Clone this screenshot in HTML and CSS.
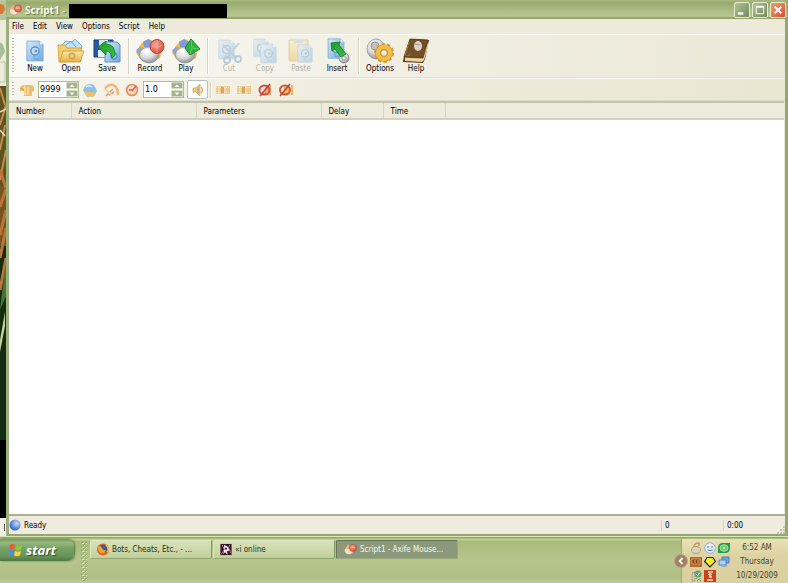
FILE: index.html
```html
<!DOCTYPE html>
<html lang="en">
<head>
<meta charset="utf-8">
<title>Script1</title>
<link rel="stylesheet" href="styles.css">
</head>
<body>
<svg class="defs" aria-hidden="true">
  <defs>
    <linearGradient id="blue" x1="0" y1="0" x2="1" y2="1"><stop offset="0" stop-color="#d8eafa"/><stop offset="1" stop-color="#6fa8dc"/></linearGradient>
    <linearGradient id="gold" x1="0" y1="0" x2="0" y2="1"><stop offset="0" stop-color="#fdeaa8"/><stop offset="1" stop-color="#e9b040"/></linearGradient>
    <linearGradient id="greenArrow" x1="0" y1="0" x2="1" y2="1"><stop offset="0" stop-color="#1f9a2c"/><stop offset="1" stop-color="#35c540"/></linearGradient>
    <radialGradient id="ball" cx=".4" cy=".3" r=".8"><stop offset="0" stop-color="#ffffff"/><stop offset=".5" stop-color="#d9d9dc"/><stop offset="1" stop-color="#77777c"/></radialGradient>
    <radialGradient id="red" cx=".4" cy=".35" r=".7"><stop offset="0" stop-color="#f4a392"/><stop offset="1" stop-color="#d64a38"/></radialGradient>
    <radialGradient id="orb" cx=".65" cy=".35" r=".7"><stop offset="0" stop-color="#c4dcfa"/><stop offset="1" stop-color="#2c60c4"/></radialGradient>
    <symbol id="mouse" viewBox="0 0 30 26">
      <path d="M4 9 9 3l5-2 4 2 4 7-10 5z" fill="#f1c04c"/>
      <path d="M8 4 13 1l5 3-2 5H9z" fill="#7f9cd6"/>
      <path d="M1 14 5 8l5 2 1 8-6 3z" fill="#eca93e"/>
      <path d="M1 12l4-3 3 3-4 5z" fill="#8aa5d9"/>
      <path d="M21 14l5 1-1 5-5 2z" fill="#e9b04a"/>
      <ellipse cx="14" cy="17" rx="9.500" ry="8" fill="url(#ball)" stroke="#8b8b8f" stroke-width=".6"/>
      <path d="M6 14q7-4 14-2" fill="none" stroke="#fff" stroke-width="1.4"/>
    </symbol>
    <symbol id="page" viewBox="0 0 20 24">
      <path d="M1 1h14l4 4v18H1z" fill="url(#blue)" stroke="#80acd6"/>
      <path d="M15 1v4h4" fill="#f2f8fe" stroke="#80acd6" stroke-width=".7"/>
      <circle cx="10" cy="12" r="4.5" fill="#c2dcf2" stroke="#5b92c7" stroke-width="1.6"/>
      <circle cx="11" cy="12" r="1.5" fill="#568fc7"/><path d="M9 16v5h5" fill="none" stroke="#72a6d4" stroke-width="1.3"/>
    </symbol>
    <symbol id="appmouse" viewBox="0 0 14 12">
      <ellipse cx="5" cy="7" rx="4.5" ry="4" fill="#f1e5d0" stroke="#b48b66" stroke-width=".6"/>
      <path d="M1 5 4 1l3 2-2 3z" fill="#eeb26b"/>
      <circle cx="9" cy="4.5" r="3.6" fill="url(#red)" stroke="#b94c3b" stroke-width=".6"/>
      <path d="M7 4h4" stroke="#fbd0bd" stroke-width=".7"/>
    </symbol>
    <symbol id="film" viewBox="0 0 14 10">
      <path d="M0 1h14v8H0z" fill="#ecc98a"/><path d="M0 2.500h14M0 7.500h14" stroke="#f7e5be" stroke-dasharray="1 1"/>
      <path d="M5 2h3v6H5z" fill="#d6a663"/><path d="M9 1v8M3 1v8" stroke="#f8e6c0"/>
    </symbol>
  </defs>
</svg>

<div class="screen">
  <div class="desktop" aria-hidden="true">
    <svg viewBox="0 0 6 536" preserveAspectRatio="none">
      <path d="M0 0h6v536H0z" fill="#142c10"/>
      <path d="M0 0h6v20H0z" fill="#b8c59d"/><path d="M0 4l4 1 1 5-3 4H0z" fill="#d87832"/>
      <path d="M0 20h6v66H0z" fill="#ecebdc"/><path d="M0 42q4 2 5 10l-5 8z" fill="#a8bf98"/><path d="M0 62h5v20H0" fill="none" stroke="#b9c49f"/>
      <path d="M0 86h6v100H0z" fill="#5b5420"/><path d="M0 186h6v60H0z" fill="#76541f"/>
      <path d="M0 88l5 17M0 125l6-20M0 150l5-25M0 180l6-30" stroke="#c98a4c" stroke-width="2"/>
      <path d="M0 112l6-3M0 130l5 6" stroke="#f3dfbd" stroke-width="1.5"/>
      <path d="M0 170l6 18M0 207l6-18M0 235l6-25M0 258l6-30M0 290l6-32" stroke="#bd7438" stroke-width="3"/>
      <path d="M0 310l6-50v36z" fill="#4c7336"/><path d="M0 340l5-28v14l-5 26z" fill="#c5d0a0"/>
      <path d="M0 440h6v78H0z" fill="#000"/><path d="M0 518h6v18H0z" fill="#f0efe6"/><path d="M4 524h1v7H4z" fill="#555"/>
    </svg>
  </div>

  <main class="window">
    <header class="titlebar">
      <svg class="app-icon" viewBox="0 0 14 12"><use href="#appmouse"/></svg>
      <h1>Script1 -</h1>
      <span class="redacted"></span>
      <div class="window-buttons">
        <button class="win-btn" aria-label="Minimize"><svg viewBox="0 0 15 15"><path d="M3 10h6v2.500H3z" fill="#fff"/></svg></button>
        <button class="win-btn" aria-label="Maximize"><svg viewBox="0 0 15 15"><path d="M3.500 4h8v7.500h-8z" fill="none" stroke="#fff"/><path d="M3 3h9v2H3z" fill="#fff"/></svg></button>
        <button class="win-btn close" aria-label="Close"><svg viewBox="0 0 15 15"><path d="M4 4l7 7M11 4l-7 7" stroke="#fff" stroke-width="2"/></svg></button>
      </div>
    </header>

    <nav class="menubar">
      <button>File</button><button>Edit</button><button>View</button><button>Options</button><button>Script</button><button>Help</button>
    </nav>

    <div class="toolbar main-tools">
      <span class="grip"></span>
      <button class="tool"><svg viewBox="0 0 30 26"><use href="#page" x="6" y="2" width="18" height="22"/></svg>New</button>
      <button class="tool"><svg viewBox="0 0 30 26">
        <path d="M4 9l6-6 6 1 3-3 7 7-2 8H5z" fill="#c6dff4" stroke="#79a8d2" stroke-width=".8"/><path d="M10 7l5-4 5 6" fill="none" stroke="#6fa2d0"/>
        <path d="M3 24 2 7h7l2 3h14v13z" fill="#f4ce6e" stroke="#cf982f" stroke-width=".8"/><path d="M4 24 7 13h21l-4 11z" fill="url(#gold)" stroke="#cc9433" stroke-width=".8"/>
        <circle cx="16" cy="18" r="2.800" fill="none" stroke="#c9a050" stroke-width="1.500"/></svg>Open</button>
      <button class="tool"><svg viewBox="0 0 30 26">
        <path d="M2 2h19v17H2z" fill="#2459a8" stroke="#163c78"/><path d="M7 2h9v6H7z" fill="#dce8f4"/><path d="M6 12h11v7H6z" fill="#e8eff6"/>
        <path d="M13 4h12l3 3v17H13z" fill="url(#blue)" stroke="#5f95c9"/><circle cx="22" cy="18" r="3" fill="none" stroke="#5f95c9" stroke-width="1.400"/>
        <path d="M6 9l8-6v3q9 0 9 11l-3 3q-1-7-6-7v4z" fill="url(#greenArrow)" stroke="#0f7a1c" stroke-width=".8"/></svg>Save</button>
      <span class="sep"></span>
      <button class="tool"><svg viewBox="0 0 30 26"><use href="#mouse" width="30" height="26"/><circle cx="22" cy="8.500" r="7" fill="url(#red)" stroke="#c04433"/><path d="M17 8q5 3 10-1M22 2v13" fill="none" stroke="#f5b0a0" stroke-width=".8"/></svg>Record</button>
      <button class="tool"><svg viewBox="0 0 30 26"><use href="#mouse" width="30" height="26"/><path d="M20 1l9 10-10 6-5-7z" fill="#2fb33a" stroke="#16872a"/><path d="M20 2l1 8-2 6M21 10l7 1" fill="none" stroke="#71d36d" stroke-width=".8"/></svg>Play</button>
      <span class="sep"></span>
      <button class="tool" disabled><svg viewBox="0 0 30 26"><use href="#page" x="4" y="1" width="17" height="21"/><path d="M9 7l14 13M25 5 13 20" stroke="#759abf" stroke-width="2"/><circle cx="13" cy="22" r="3" fill="none" stroke="#5d90cb" stroke-width="1.800"/><circle cx="24" cy="21" r="3" fill="none" stroke="#5d90cb" stroke-width="1.800"/></svg>Cut</button>
      <button class="tool" disabled><svg viewBox="0 0 30 26"><use href="#page" x="3" y="0" width="16" height="20"/><use href="#page" x="10" y="5" width="17" height="21"/></svg>Copy</button>
      <button class="tool" disabled><svg viewBox="0 0 30 26"><path d="M3 2h19v21H3z" fill="url(#gold)" stroke="#c89c50"/><path d="M8 1h9v4H8z" fill="#bcc4cc"/><use href="#page" x="11" y="6" width="16" height="19"/></svg>Paste</button>
      <button class="tool"><svg viewBox="0 0 30 26"><use href="#page" x="5" y="0" width="18" height="21"/><circle cx="22" cy="20" r="5" fill="url(#ball)" stroke="#777b7d" stroke-width=".8"/><circle cx="22" cy="20" r="2" fill="#eff2f2" stroke="#979b9c"/><path d="M9 5l9-1-1 3 7 9-5 3-6-8-3 2z" fill="url(#greenArrow)" stroke="#0f7a1c" stroke-width=".8"/></svg>Insert</button>
      <span class="sep"></span>
      <button class="tool"><svg viewBox="0 0 30 26"><ellipse cx="11" cy="11" rx="9" ry="10" fill="url(#ball)" stroke="#8c8c8e" stroke-width=".7"/><circle cx="10" cy="8" r="4" fill="#c2c2c5" stroke="#929296"/>
        <circle cx="19" cy="15" r="8.500" fill="none" stroke="#dd9e2c" stroke-width="3" stroke-dasharray="3 2.340"/><circle cx="19" cy="15" r="6" fill="none" stroke="#c9892a" stroke-width="5.500"/><circle cx="19" cy="15" r="6" fill="none" stroke="#f3bd48" stroke-width="4.500"/><circle cx="19" cy="15" r="3.300" fill="#f4eed8" stroke="#b97a1f" stroke-width=".8"/></svg>Options</button>
      <button class="tool"><svg viewBox="0 0 30 26"><path d="M9 1l19 1-4 19-2 4L2 24l1-6z" fill="#523415"/><path d="M4 19l17 1 6-16 1 1-5 17-2 2-17-1z" fill="#e6d5a2"/><path d="M9 1l18 1-5 18-19-1z" fill="#755026" stroke="#493015" stroke-width=".7"/><ellipse cx="17" cy="8" rx="4" ry="5" fill="#d9d3c8"/><path d="M14 6l5 1" stroke="#a29787"/><path d="M8 4l-4 14" stroke="#a87b37"/><path d="M5 18h4l1-3z" fill="#5c8b34"/></svg>Help</button>
    </div>

    <div class="toolbar play-tools">
      <span class="grip"></span>
      <button class="mini" aria-label="Repeat"><svg viewBox="0 0 16 14"><path d="M1 4l3-2h9l2 2v4l-2 1v4H5V8H1z" fill="#edbd72"/><path d="M6 3v9M9 4v8" stroke="#f8dba2" stroke-width="1.500"/><path d="M2 5l3 2" stroke="#d3964c"/></svg></button>
      <span class="spin"><input type="text" value="9999" aria-label="Repeat count"><span class="arrows"><button aria-label="More repeats"><svg viewBox="0 0 8 5"><path d="M1.500 4 4 1.500 6.500 4z" fill="#fff"/></svg></button><button aria-label="Fewer repeats"><svg viewBox="0 0 8 5"><path d="M1.500 1.500 4 4l2.500-2.500z" fill="#fff"/></svg></button></span></span>
      <button class="mini" aria-label="Mouse moves"><svg viewBox="0 0 16 14"><path d="M1 7q2-6 7-6 4 0 5 3l2 4-3 5-7 1z" fill="#8dbfe8"/><path d="M1 7q4 3 9 2l4 1-3 4-7-1z" fill="#edc267"/><path d="M4 4q3-2 6 0" fill="none" stroke="#d9efff" stroke-width="1.500"/></svg></button>
      <button class="mini" aria-label="Delays"><svg viewBox="0 0 16 14"><path d="M2 6q3-5 8-4 5 2 5 10" fill="none" stroke="#f0b878" stroke-width="2.500"/><path d="M3 13 10 6M6 12l5-3" stroke="#d99a78" stroke-width="1.500"/><path d="M3 7l6 5" stroke="#f5d4a5" stroke-width="2"/></svg></button>
      <button class="mini" aria-label="Speed"><svg viewBox="0 0 16 14"><circle cx="8" cy="7" r="5.500" fill="#fbd9bb" stroke="#e98a55" stroke-width="1.600"/><path d="M8 8l4-5M5 7h3" stroke="#cf5a72" stroke-width="1.500"/></svg></button>
      <span class="spin"><input type="text" value="1.0" aria-label="Speed factor"><span class="arrows"><button aria-label="Faster"><svg viewBox="0 0 8 5"><path d="M1.500 4 4 1.500 6.500 4z" fill="#fff"/></svg></button><button aria-label="Slower"><svg viewBox="0 0 8 5"><path d="M1.500 1.500 4 4l2.500-2.500z" fill="#fff"/></svg></button></span></span>
      <button class="mini pressed" aria-label="Sound"><svg viewBox="0 0 16 14"><path d="M3 5h3l4-4v12L6 9H3z" fill="#f0cb72" stroke="#d5a95c" stroke-width=".8"/><path d="M8 4v6" stroke="#a2abc8" stroke-width="1.500"/><path d="M11 4q3 3 0 6" fill="none" stroke="#e2ab4d" stroke-width="1.400"/></svg></button>
      <span class="sep"></span>
      <button class="mini" aria-label="Show frames"><svg viewBox="0 0 16 14"><use href="#film" x="1" y="2" width="14" height="10"/></svg></button>
      <button class="mini" aria-label="Next frame"><svg viewBox="0 0 16 14"><use href="#film" x="1" y="2" width="14" height="10"/></svg></button>
      <button class="mini" aria-label="Hide frames"><svg viewBox="0 0 16 14"><path d="M9 2h5v10H6z" fill="#eda979"/><ellipse cx="7.500" cy="7" rx="5" ry="4.500" fill="none" stroke="#d4503c" stroke-width="2"/><path d="M3 13 13 1" stroke="#b8473b" stroke-width="1.500"/></svg></button>
      <button class="mini" aria-label="Clear frames"><svg viewBox="0 0 16 14"><path d="M13 2h2v10h-2zM6 4h5v8H6z" fill="#edba59"/><ellipse cx="7" cy="7" rx="5" ry="4.500" fill="none" stroke="#d4503c" stroke-width="2"/><path d="M2 13 12 1" stroke="#b8473b" stroke-width="1.500"/></svg></button>
    </div>

    <section class="list">
      <table>
        <thead><tr><th class="narrow">Number</th><th class="wide">Action</th><th class="wide">Parameters</th><th class="narrow">Delay</th><th class="narrow">Time</th><th></th></tr></thead>
      </table>
    </section>

    <footer class="statusbar">
      <svg class="orb" viewBox="0 0 12 12"><circle cx="6" cy="6" r="5.500" fill="url(#orb)"/></svg>
      <span class="ready">Ready</span>
      <span class="cell">0</span>
      <span class="cell">0:00</span>
      <svg class="resize" viewBox="0 0 8 8"><path d="M6 0h2v2H6zM3 3h2v2H3zM6 3h2v2H6zM0 6h2v2H0zM3 6h2v2H3zM6 6h2v2H6z" fill="#c4c1ae"/></svg>
    </footer>
  </main>

  <div class="taskbar">
    <button class="start"><svg viewBox="0 0 15 14"><path d="M2 2q3-2 5 0L6 6.500q-3-1.500-5 0z" fill="#ee5b2e"/><path d="M8 2.500q3 1.500 6 0L13 7q-3 1.500-6 0z" fill="#8ccc3a"/><path d="M1 7.500q3-2 5 0L5 12q-3-1.500-5 0z" fill="#4a8fe6"/><path d="M7 8q3 1.500 6 0l-1 4.500q-3 1.500-6 0z" fill="#fbd03b"/></svg>start</button>
    <svg class="dots" aria-hidden="true"><defs><pattern id="dot" width="4" height="4" patternUnits="userSpaceOnUse"><path d="M0 0h2v1H0zM2 2h2v1H2z" fill="#8fa268"/><path d="M1 1h2v1H1zM3 3h1v1H3z" fill="#e8efc9"/></pattern></defs><rect width="6" height="100%" fill="url(#dot)"/></svg>
    <div class="tasks">
      <button class="task"><svg viewBox="0 0 14 14"><circle cx="7" cy="7" r="6.500" fill="#d86421"/><circle cx="7.500" cy="6" r="4" fill="#36609f"/><path d="M1 3l4 1 2 3 3 1-2 3q-5 1-6-4z" fill="#f1a032"/><path d="M10 2q4 3 2 8" fill="none" stroke="#f7bd4e" stroke-width="1.500"/></svg>Bots, Cheats, Etc., - ...</button>
      <button class="task"><svg viewBox="0 0 14 14"><path d="M1 1h12v12H1z" fill="#321326"/><path d="M5 2l4 2 2 4-3 1 1 4-3-3-2 2 1-5z" fill="#f6e9ef"/><path d="M3 2l2 5-3 5M11 2l-1 3 2 6" fill="none" stroke="#ba7398"/><path d="M6 5h2v2H6z" fill="#321326"/></svg>«i online</button>
      <button class="task active"><svg viewBox="0 0 14 12"><use href="#appmouse"/></svg>Script1 - Axife Mouse...</button>
    </div>
    <aside class="tray">
      <button class="chevron" aria-label="Hide icons"><svg viewBox="0 0 14 14"><circle cx="7" cy="7" r="6.500" fill="#a48062" stroke="#c2a282"/><path d="M8.500 4 5.500 7l3 3" fill="none" stroke="#fff" stroke-width="1.800"/></svg></button>
      <div class="tray-icons">
        <svg viewBox="0 0 12 12"><ellipse cx="6" cy="8" rx="4.500" ry="3.500" fill="#ddd2bd" stroke="#b99d76"/><path d="M4 5q0-4 5-4v3" fill="none" stroke="#cb9460" stroke-width="1.500"/></svg>
        <svg viewBox="0 0 12 12"><circle cx="6" cy="6" r="5.300" fill="#e6eff8" stroke="#9aaecb"/><path d="M3 5h2M7 5h2M3.500 8q2.500 1 5 0" fill="none" stroke="#4d75b8"/></svg>
        <svg viewBox="0 0 12 12"><path d="M0 6q0-5 5-5h7v5q0 5-5 5H0z" fill="#1f9a48"/><ellipse cx="6" cy="6" rx="4" ry="3.200" fill="#5cc560" stroke="#b4e8a6"/><circle cx="6" cy="6" r="1.300" fill="#f0ffdb"/></svg>
        <svg viewBox="0 0 12 12"><path d="M0 1h12v10H0z" fill="#b46a2e"/><path d="M2 3h8v5H2z" fill="#74401e" stroke="#e49c55"/><path d="M5 4v3M8 4v3" stroke="#f0c887"/></svg>
        <svg viewBox="0 0 12 12"><path d="M.7 5.500 3 1.500h6l2.400 4L6 11z" fill="#f5ef21" stroke="#28280c" stroke-width="1.200"/></svg>
        <svg viewBox="0 0 12 12"><path d="M4 1h7v6H4z" fill="#6fa5ee" stroke="#5578ae"/><path d="M1 4h7v5H1z" fill="#a9d3fb" stroke="#5c82b5"/><path d="M4 9h5v2H3z" fill="#9daabb"/></svg>
        <svg viewBox="0 0 12 12"><path d="M2 3l3-1v9H2zM6 8l5 3M7 11l4-3" fill="none" stroke="#868e83" stroke-dasharray="1.500 .8"/><circle cx="8" cy="4" r="3.500" fill="#56ae68"/><path d="M6 4l1.500 1.500L10 2.500" fill="none" stroke="#fff"/></svg>
        <svg viewBox="0 0 12 12"><path d="M0 0h12v12H0z" fill="#cf3f1a"/><path d="M4 2h5M4 4.500h4M5 7h3M3 10h6" stroke="#ffe7c2" stroke-width="1.500"/><path d="M6 3v5" stroke="#ffe7c2"/></svg>
      </div>
      <div class="clock"><span>6:52 AM</span><span>Thursday</span><span>10/29/2009</span></div>
    </aside>
  </div>
</div>
</body>
</html>
```
FILE: styles.css
```css
* { box-sizing: border-box; }

body {
  margin: 0;
  font: 8px/10px "DejaVu Sans Condensed", "Noto Sans", sans-serif;
  color: #000;
}

button {
  margin: 0;
  padding: 0;
  border: 0;
  background: none;
  font: inherit;
  color: inherit;
}

svg { display: block; flex: none; }

.defs { position: absolute; width: 0; height: 0; }

.screen {
  display: grid;
  grid-template: minmax(0, 1fr) 47px / 6px minmax(0, 1fr);
  height: 100vh;
}

.desktop svg { width: 100%; height: 100%; }
.desktop { min-height: 0; }

.window {
  display: flex;
  flex-direction: column;
  min-height: 0;
  border: solid #93a870;
  border-width: 0 3px 2px;
  border-left-color: #9bae7d;
  background: #ece9d8;
}

/* Title bar */
.titlebar {
  display: flex;
  align-items: center;
  height: 19px;
  padding: 0 1px 0 2px;
  margin: 0 -2px;
  background: linear-gradient(#a9ba80, #98aa6e 15%, #abbd83 55%, #b7c690 85%, #8fa369 95%);
}
.app-icon { width: 14px; height: 12px; }
h1 {
  margin: 0 0 0 2px;
  width: 44px;
  font: bold 10px/14px "Open Sans", "Noto Sans", sans-serif;
  color: #fbfcef;
  text-shadow: 1px 1px 1px #65743f;
  white-space: nowrap;
}
.redacted { width: 158px; height: 14px; margin-top: 3px; background: #000; }
.window-buttons { display: flex; gap: 2px; margin-left: auto; }
.win-btn {
  width: 16px;
  height: 16px;
  border: 1px solid #e6edcf;
  border-radius: 2px;
  background: linear-gradient(135deg, #b3c296, #74885a);
}
.win-btn svg { width: 100%; height: 100%; }
.win-btn.close { background: linear-gradient(135deg, #f39a78, #d94f2b); }

/* Menu */
.menubar {
  display: flex;
  gap: 1px;
  height: 15px;
  background: #edeadb;
}
.menubar button { padding: 1px 4px 0; }
.menubar button:first-child { padding-left: 3px; }

/* Toolbars */
.toolbar {
  display: flex;
  align-items: center;
  border-top: 1px solid #fbfaf3;
  border-bottom: 1px solid #dfdcc8;
  background: linear-gradient(90deg, #fafaf6, #f1efe3 50%, #ebe8d7);
}
.main-tools { height: 44px; }
.play-tools {
  height: 23px;
  background: linear-gradient(90deg, #f6f5ed, #efecde 45%, #e9e6d2);
}
.grip {
  width: 2px;
  align-self: stretch;
  margin: 3px 2px 3px 3px;
  background: repeating-linear-gradient(#b4b6a4 0 1px, #f8f8f0 1px 3px);
}
.tool {
  display: flex;
  flex-direction: column;
  align-items: center;
  width: 36px;
}
.tool svg { width: 30px; height: 26px; }
.tool:disabled { color: #b5b3a8; }
.tool:disabled svg { opacity: .4; }
.main-tools .grip { margin-right: 3px; }
.sep {
  width: 2px;
  align-self: stretch;
  margin: 3px 2px 3px 3px;
  border-left: 1px solid #d6d3c2;
  border-right: 1px solid #fdfdf8;
}
.play-tools .sep { margin: 3px 0 3px 2px; }
.mini {
  display: grid;
  place-items: center;
  width: 21px;
  height: 19px;
}
.mini svg { width: 16px; height: 14px; }
.pressed {
  margin: 0 0 0 3px;
  border: 1px solid #b9c0c3;
  border-radius: 2px;
  background: #fff;
}
.spin {
  display: flex;
  width: 41px;
  height: 17px;
  margin-left: 1px;
  border: 1px solid #b1bb98;
  background: #fff;
}
.spin input {
  flex: 1;
  min-width: 0;
  padding: 0 0 1px 1px;
  border: 0;
  background: none;
  font: 9px/12px "DejaVu Sans Condensed", "Noto Sans", sans-serif;
  color: #000;
}
.arrows { display: grid; gap: 1px; width: 12px; }
.arrows button {
  display: grid;
  place-items: center;
  border: 1px solid #d5dcc4;
  border-radius: 1px;
  background: #a3b38d;
}
.arrows svg { width: 8px; height: 5px; }

/* List */
.list {
  flex: 1;
  min-height: 0;
  margin-right: 1px;
  border-top: 2px solid #c3c4b0;
  background: #fff;
}
table { width: 100%; table-layout: fixed; border-collapse: collapse; }
th {
  height: 16px;
  padding: 3px 0 1px 7px;
  border-right: 1px solid #d6d3c2;
  border-bottom: 2px solid #d3d0be;
  background: #edebdb;
  font-weight: normal;
  text-align: left;
}
th:last-child { border-right: 0; }
.narrow { width: 62px; }
.wide { width: 125px; }

/* Status bar */
.statusbar {
  display: flex;
  align-items: center;
  height: 20px;
  border-top: 2px solid #adad98;
  background: #efecdf;
}
.orb { width: 12px; height: 12px; }
.ready { flex: 1; padding: 1px 0 0 3px; }
.cell { width: 62px; padding: 1px 0 0 3px; border-left: 1px solid #d4d1bf; }
.cell + .cell { width: 54px; }
.resize { width: 8px; height: 8px; align-self: flex-end; }

/* Taskbar */
.taskbar {
  grid-column: 1 / -1;
  display: flex;
  align-items: flex-start;
  background: linear-gradient(#dde7ba 0 1px, #8fa667 1px 2px, #c8d59c 3px, #aabb7d 5px, #b6c58c 24px, #b0bf86 42px, #c0cc98);
}
.start {
  display: flex;
  align-items: center;
  gap: 3px;
  width: 74px;
  height: 22px;
  margin-top: 3px;
  padding-left: 8px;
  border-radius: 0 7px 7px 0;
  background: linear-gradient(#6a9557, #97b982 15%, #74a061 45%, #66935a 80%, #4c763e);
  box-shadow: 1px 0 2px #55733c;
  font: italic bold 13px/16px "Open Sans", "Noto Sans", sans-serif;
  color: #fff;
  text-shadow: 1px 1px 1px #35522a;
}
.start svg { width: 15px; height: 14px; }
.dots { width: 6px; height: 39px; margin: 6px 3px 0 7px; }
.tasks {
  display: flex;
  flex: 1;
  gap: 1px;
  min-width: 0;
  margin-top: 4px;
}
.task {
  display: flex;
  align-items: center;
  gap: 2px;
  flex: 0 1 122px;
  min-width: 0;
  height: 19px;
  padding-left: 5px;
  border: 1px solid;
  border-color: #dfe9c4 #859966 #91a66f #dfe9c4;
  border-radius: 2px;
  background: linear-gradient(#d8e2b8, #c2cf9c);
  white-space: nowrap;
  color: #263016;
}
.task svg { width: 14px; height: 13px; }
.task.active {
  padding-left: 7px;
  border-color: #657357 #99a77e #99a77e #657357;
  background: #8b9879;
  color: #f7f9ea;
}
.tray {
  position: relative;
  display: flex;
  align-items: center;
  gap: 4px;
  align-self: stretch;
  width: 107px;
  margin-top: 3px;
  padding: 1px 0 0 8px;
  border-left: 1px solid #a7a36f;
  background: linear-gradient(#e7e1b5, #ddd2a3 40%, #dacf9f);
}
.chevron { position: absolute; left: -8px; top: 15px; }
.chevron svg { width: 14px; height: 14px; }
.tray-icons {
  display: grid;
  grid-template-columns: repeat(3, 12px);
  gap: 2px;
}
.tray-icons svg { width: 12px; height: 12px; }
.clock {
  display: grid;
  flex: 1;
  padding-right: 8px;
  line-height: 14px;
  text-align: center;
  color: #45412b;
}
```
